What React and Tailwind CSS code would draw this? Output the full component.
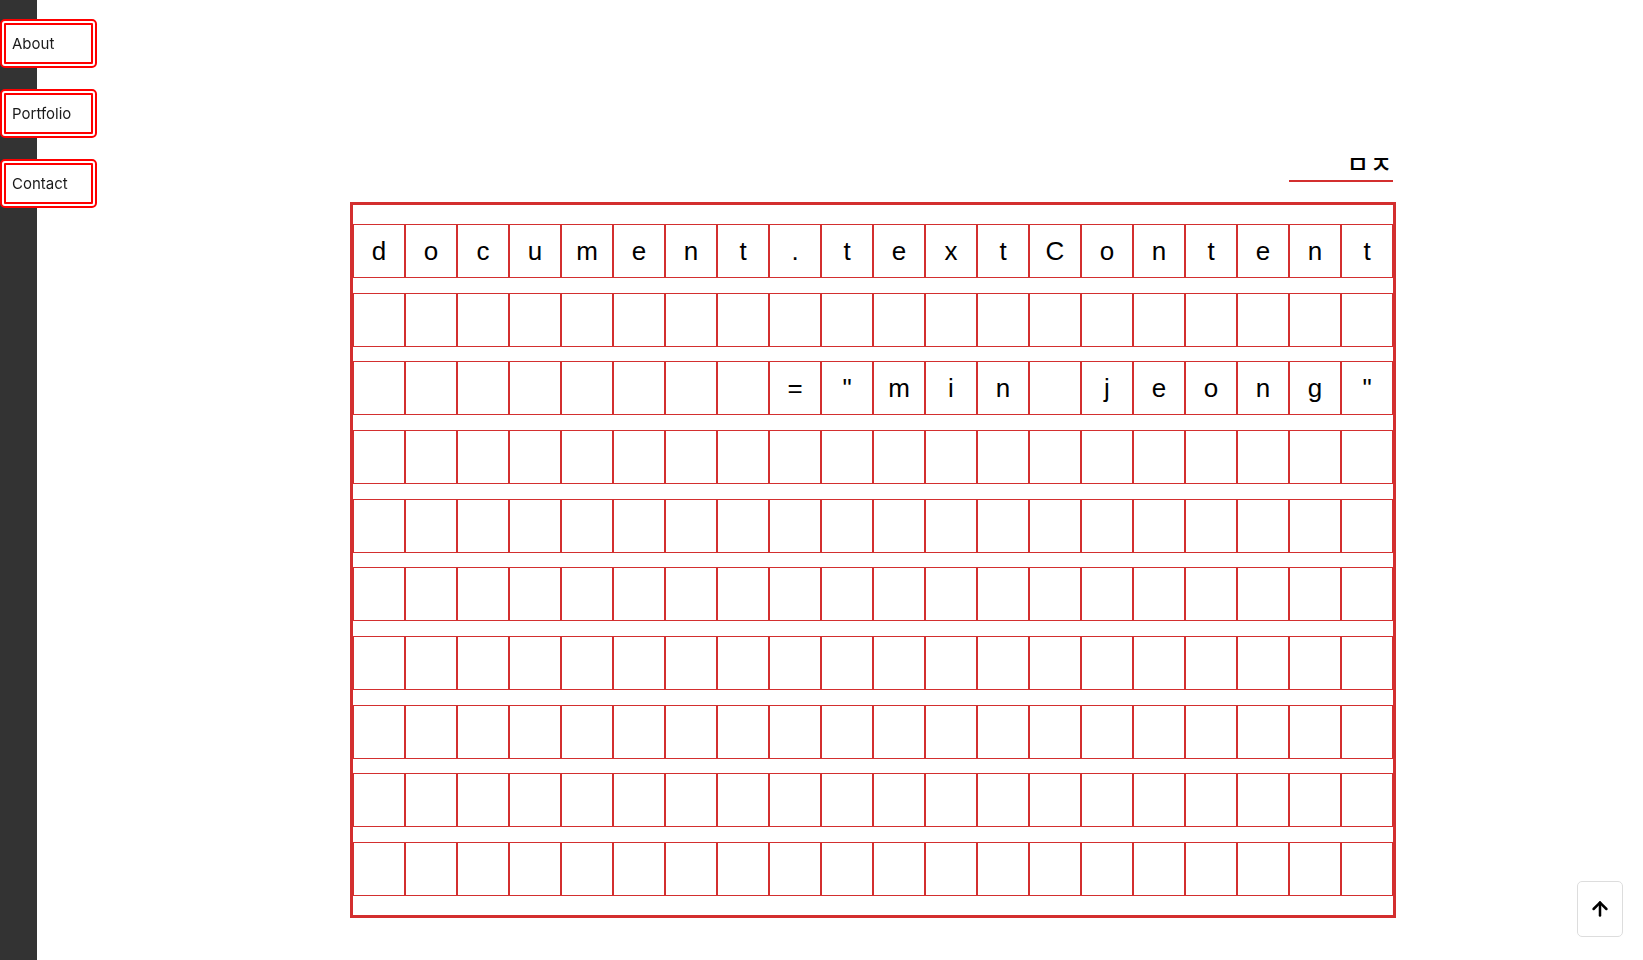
import { ArrowUp } from "lucide-react";

const rows = [
  "document.textContent".split(""),
  Array(20).fill(""),
  [...Array(8).fill(""), "=", '"', "m", "i", "n", "", "j", "e", "o", "n", "g", '"'],
  ...Array(7).fill(null).map(() => Array(20).fill("")),
];

const links = ["About", "Portfolio", "Contact"];

const App = () => {
  return (
    <div className="min-h-screen bg-white font-['Inter',sans-serif]">
      {/* sidebar */}
      <aside className="fixed left-0 top-0 h-screen w-[37px] bg-[#333333]">
        <nav className="flex flex-col gap-[21px] pt-[19px]">
          {links.map((link) => (
            <button
              key={link}
              className="w-[97px] h-[49px] shrink-0 bg-white border-[6px] border-double border-[#ff0000] rounded-[5px] pl-[6px] pt-[2px] text-left text-[15px] text-[#1a1a1a]"
            >
              {link}
            </button>
          ))}
        </nav>
      </aside>

      <main className="pl-[350px] pt-[148px] pb-[41px]">
        <div className="w-[1046px] flex justify-end">
          <div className="w-[104px] mr-[3px] border-b-2 border-[#d32f2f] pb-[2px] pr-0 text-right text-[24px] leading-[30px] tracking-[1px] font-medium text-black font-['Noto_Sans_CJK_KR',sans-serif]">
            ㅁㅈ
          </div>
        </div>

        <div className="mt-[20px] w-[1046px] border-[3px] border-[#d32f2f] py-[19px] flex flex-col gap-[14.67px]">
          {rows.map((row, i) => (
            <div key={i} className="flex">
              {row.map((ch, j) => (
                <div
                  key={j}
                  className="w-[52px] h-[54px] border border-[#d32f2f] flex items-center justify-center text-[26px] text-black font-['Liberation_Sans',Arial,sans-serif]"
                >
                  {ch}
                </div>
              ))}
            </div>
          ))}
        </div>
      </main>

      <button className="fixed right-[20px] bottom-[23px] w-[46px] h-[56px] bg-white border border-[#dddddd] rounded-[5px] flex items-center justify-center">
        <ArrowUp className="w-[22px] h-[22px] text-black" strokeWidth={2.75} />
      </button>
    </div>
  );
};

export default App;
